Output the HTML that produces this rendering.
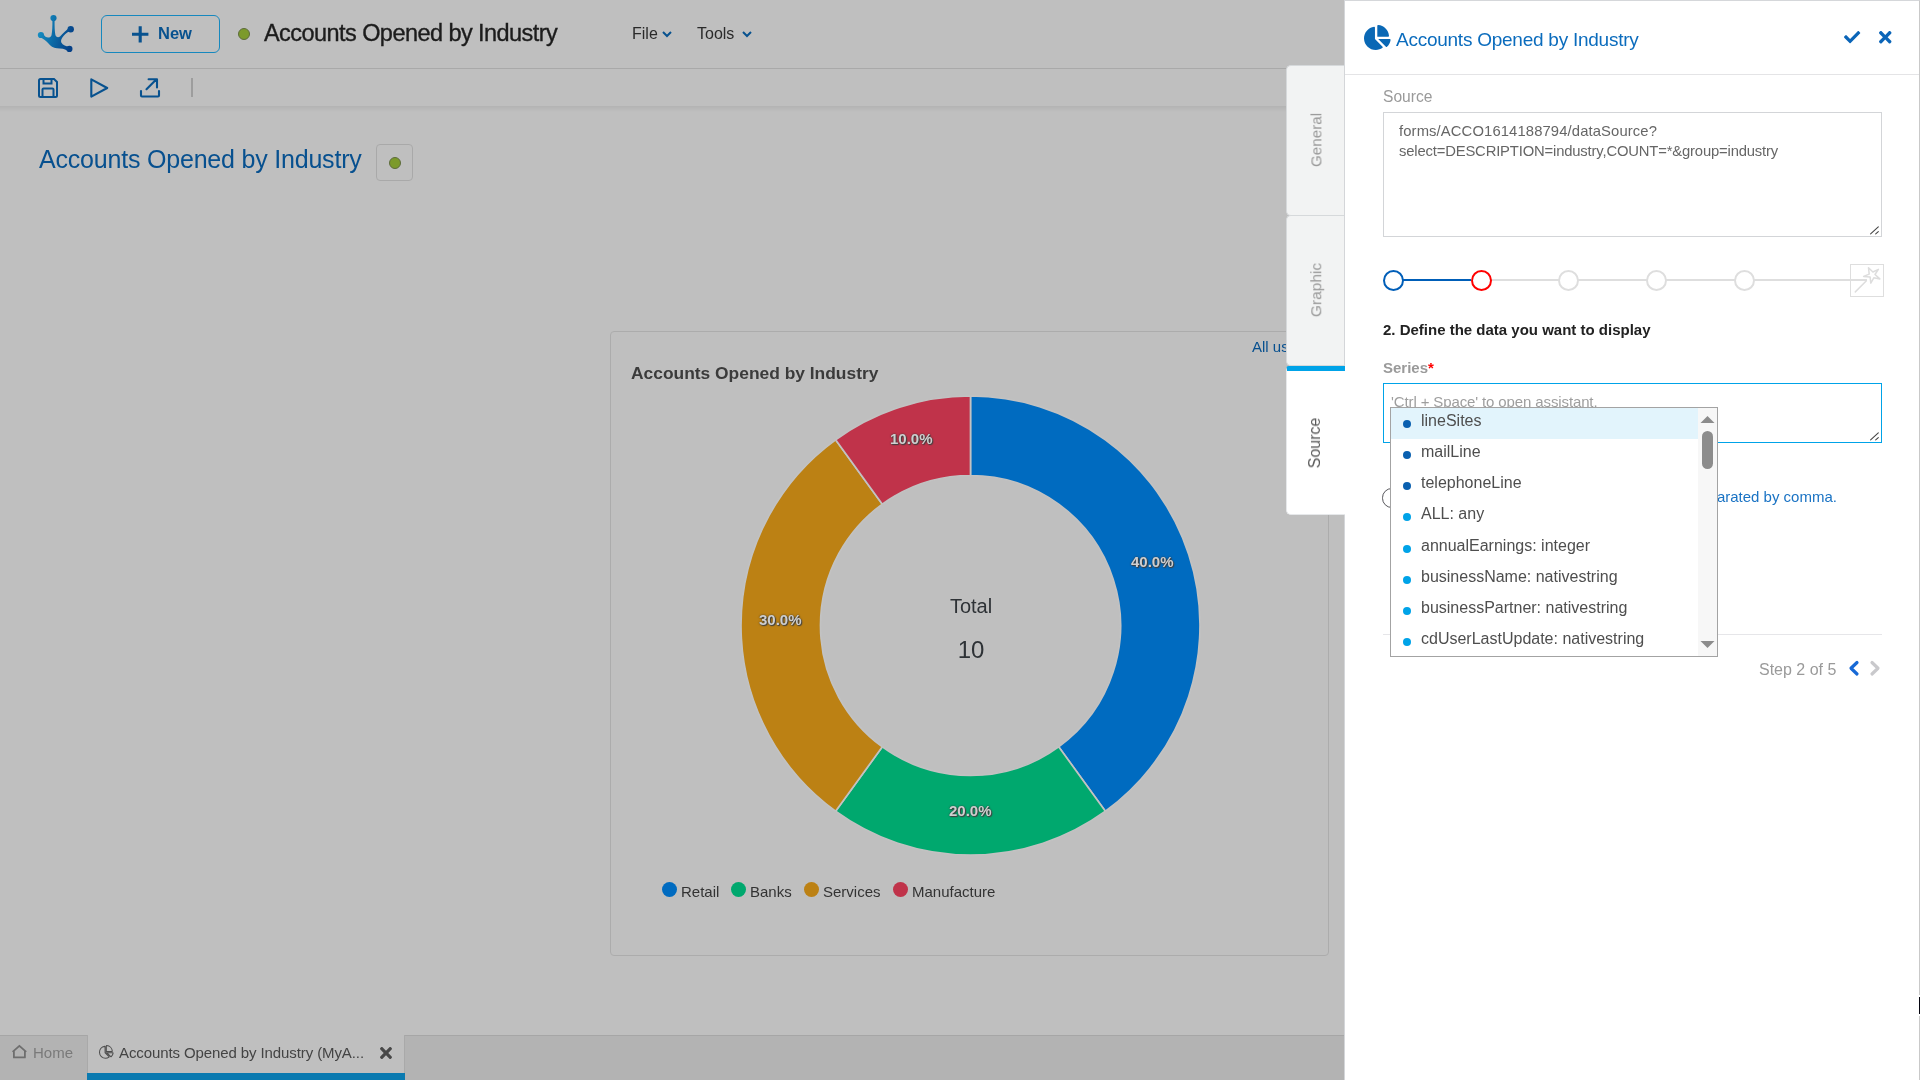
<!DOCTYPE html>
<html><head><meta charset="utf-8">
<style>
*{box-sizing:border-box;margin:0;padding:0}
html,body{width:1920px;height:1080px;overflow:hidden;background:#bfbfbf;font-family:"Liberation Sans",sans-serif}
.a{position:absolute;line-height:1;white-space:nowrap}
svg{position:absolute;overflow:visible}
.a{-webkit-font-smoothing:antialiased;will-change:transform}
</style></head>
<body>
<!-- ============ LEFT APP (dimmed) ============ -->
<div class="a" style="left:0;top:68px;width:1344px;height:1px;background:#a9a9a9"></div>
<div class="a" style="left:0;top:106px;width:1344px;height:6px;background:linear-gradient(#b3b3b3,#bfbfbf)"></div>

<!-- logo -->
<svg style="left:0;top:0" width="100" height="68" viewBox="0 0 100 68">
<defs><linearGradient id="lg" gradientUnits="userSpaceOnUse" x1="38" y1="32" x2="72" y2="42"><stop offset="0" stop-color="#178ec2"/><stop offset="0.45" stop-color="#0b6ba7"/><stop offset="1" stop-color="#053f86"/></linearGradient></defs>
<g fill="url(#lg)">
<circle cx="53.5" cy="18.1" r="3.1"/>
<circle cx="40.9" cy="35" r="3.1"/>
<circle cx="70.7" cy="29.2" r="3.2"/>
<circle cx="69.4" cy="48.9" r="3.1"/>
<path d="M52.4 20C52.5 26 52.2 32 51.5 35.2C50.8 37.5 48 38.2 45.5 36.8L42.5 33.5L39.5 37C43 38.5 46 40.5 48.5 43.5C50.5 46 53 48 57 48.2C61 48.4 65 48.8 68 50.8L70.5 47.2C66 46.5 62.5 45 61.3 42.5C60.5 40.5 61.5 38.5 63.5 36C66 33 68.5 31.2 71.5 30.8L69.8 27.6C67 29.5 63 33.5 60 36.5C58 38 55.8 37 55.3 34.5C54.7 31 54.5 26 54.6 20Z"/>
</g></svg>

<!-- New button -->
<div class="a" style="left:101px;top:15px;width:119px;height:38px;border:1.5px solid #1688be;border-radius:6px"></div>
<svg style="left:132px;top:26px" width="17" height="17" viewBox="0 0 17 17"><path d="M8.2 0.3v16.2M0 8.3h16.4" stroke="#08528f" stroke-width="3.1"/></svg>
<div class="a" style="left:158px;top:25px;font-size:16.5px;font-weight:bold;color:#08528f">New</div>

<!-- status dot + title -->
<div class="a" style="left:238px;top:28px;width:12px;height:12px;border-radius:50%;background:#7c9a2b;border:1px solid #5d6b3c"></div>
<div class="a" style="left:264px;top:22px;font-size:23.5px;color:#1c1c1c;letter-spacing:-0.56px;-webkit-text-stroke:0.35px #1c1c1c">Accounts Opened by Industry</div>

<!-- menus -->
<div class="a" style="left:632px;top:26px;font-size:16px;color:#2a2a2a">File</div>
<svg style="left:662px;top:31px" width="10" height="6" viewBox="0 0 10 6"><path d="M1 1l4 4 4-4" fill="none" stroke="#08528f" stroke-width="2"/></svg>
<div class="a" style="left:697px;top:26px;font-size:16px;color:#2a2a2a">Tools</div>
<svg style="left:742px;top:31px" width="10" height="6" viewBox="0 0 10 6"><path d="M1 1l4 4 4-4" fill="none" stroke="#08528f" stroke-width="2"/></svg>

<!-- toolbar icons -->
<svg style="left:38px;top:78px" width="20" height="20" viewBox="0 0 20 20" fill="none" stroke="#08528f" stroke-width="2">
<path d="M2.5 1h13.5l3 3v13.5a1.5 1.5 0 0 1-1.5 1.5h-15A1.5 1.5 0 0 1 1 17.5v-15A1.5 1.5 0 0 1 2.5 1z"/>
<path d="M5.5 1.5v4h8v-4"/><path d="M4.5 19v-7.5a1 1 0 0 1 1-1h9a1 1 0 0 1 1 1V19"/></svg>
<svg style="left:90px;top:78px" width="20" height="20" viewBox="0 0 20 20" fill="none" stroke="#08528f" stroke-width="2.1" stroke-linejoin="round"><path d="M1.3 1.4 L17.2 10 L1.3 18.6 Z"/></svg>
<svg style="left:140px;top:78px" width="20" height="20" viewBox="0 0 20 20" fill="none" stroke="#08528f" stroke-width="2.1" stroke-linecap="round" stroke-linejoin="round"><path d="M1 13V17.5Q1 18.5 2 18.5H18Q19 18.5 19 17.5V13"/><path d="M6.5 11.2L16.2 1.6M8.6 1.2H17V9.4"/></svg>
<div class="a" style="left:191px;top:78px;width:1.5px;height:19px;background:#9d9d9d"></div>

<!-- page title -->
<div class="a" style="left:39px;top:146.6px;font-size:25px;color:#07508f;letter-spacing:-0.2px">Accounts Opened by Industry</div>
<div class="a" style="left:376px;top:144px;width:37px;height:37px;border:1.5px solid #a9a9a9;border-radius:4px"></div>
<div class="a" style="left:388.5px;top:156.5px;width:12px;height:12px;border-radius:50%;background:#7c9a2b;border:1px solid #5d6b3c"></div>

<!-- chart box -->
<div class="a" style="left:610px;top:331px;width:718.5px;height:624.5px;border:1px solid #acacac;border-radius:4px"></div>
<div class="a" style="left:630.5px;top:365.3px;font-size:17.4px;font-weight:bold;color:#3b3b3b">Accounts Opened by Industry</div>
<div class="a" style="left:1252px;top:338.5px;font-size:15px;color:#07508f">All users</div>

<svg style="left:0;top:0" width="1344" height="1080" viewBox="0 0 1344 1080">
<g stroke="#c2c2c2" stroke-width="1.7" stroke-linejoin="round">
<path d="M970.5,396.0A229.5,229.5 0 0 1 1105.4,811.17L1058.67,746.85A150,150 0 0 0 970.5,475.5Z" fill="#006bc0"/>
<path d="M1105.4,811.17A229.5,229.5 0 0 1 835.6,811.17L882.33,746.85A150,150 0 0 0 1058.67,746.85Z" fill="#00a86e"/>
<path d="M835.6,811.17A229.5,229.5 0 0 1 835.6,439.83L882.33,504.15A150,150 0 0 0 882.33,746.85Z" fill="#bc8114"/>
<path d="M835.6,439.83A229.5,229.5 0 0 1 970.5,396.0L970.5,475.5A150,150 0 0 0 882.33,504.15Z" fill="#c0334a"/>
</g>
</svg>
<div class="a" style="left:921px;top:595.9px;width:100px;text-align:center;font-size:20px;color:#2e3236">Total</div>
<div class="a" style="left:921.2px;top:637.5px;width:100px;text-align:center;font-size:24px;color:#2e3236">10</div>
<div class="a lbl" style="left:1131px;top:554px">40.0%</div>
<div class="a lbl" style="left:890px;top:431px">10.0%</div>
<div class="a lbl" style="left:759px;top:612px">30.0%</div>
<div class="a lbl" style="left:949px;top:803px">20.0%</div>
<style>.lbl{font-size:15px;font-weight:bold;color:#cfcfcf;text-shadow:0 0 2px #333,1px 1px 1px #444}</style>

<!-- legend -->
<div class="a" style="left:662px;top:882px;width:15px;height:15px;border-radius:50%;background:#006bc0"></div>
<div class="a" style="left:681px;top:884px;font-size:15px;color:#333">Retail</div>
<div class="a" style="left:731px;top:882px;width:15px;height:15px;border-radius:50%;background:#00a86e"></div>
<div class="a" style="left:750px;top:884px;font-size:15px;color:#333">Banks</div>
<div class="a" style="left:804px;top:882px;width:15px;height:15px;border-radius:50%;background:#bc8114"></div>
<div class="a" style="left:823px;top:884px;font-size:15px;color:#333">Services</div>
<div class="a" style="left:893px;top:882px;width:15px;height:15px;border-radius:50%;background:#c0334a"></div>
<div class="a" style="left:912px;top:884px;font-size:15px;color:#333">Manufacture</div>

<!-- bottom tab bar -->
<div class="a" style="left:0;top:1035px;width:1344px;height:45px;background:#b3b3b3;border-top:1px solid #a6a6a6"></div>
<div class="a" style="left:86.8px;top:1035px;width:318px;height:45px;background:#bfbfbf;border-left:1px solid #a9a9a9;border-right:1px solid #a9a9a9"></div>
<div class="a" style="left:87px;top:1073px;width:318px;height:7px;background:#0a7ab0"></div>
<svg style="left:12px;top:1045px" width="15" height="14" viewBox="0 0 15 14" fill="none" stroke="#6e6e6e" stroke-width="1.8" stroke-linejoin="round"><path d="M0.6 6.8L7.4 0.8L14.2 6.8M1.9 5.8V12.4H12.9V5.8"/></svg>
<div class="a" style="left:33px;top:1045px;font-size:15px;color:#7a7a7a">Home</div>
<svg style="left:98.6px;top:1044.8px" width="14.6" height="13.8" viewBox="-20 -20 584 552"><path fill="none" stroke="#4e4e4e" stroke-width="42" d="M527.79 288H290.5l158.03 158.03c6.04 6.04 15.98 6.53 22.19.68 38.7-36.46 65.32-85.61 73.13-140.86 1.34-9.46-6.51-17.85-16.06-17.85zm-15.83-64.8C503.72 103.74 408.26 8.28 288.8.04 279.68-.59 272 7.1 272 16.24V240h223.77c9.14 0 16.82-7.68 16.19-16.8zM224 288V50.71c0-9.55-8.39-17.4-17.84-16.06C86.99 51.49-4.1 155.6.14 280.37 4.5 408.51 114.83 513.59 243.03 511.98c50.4-.63 96.97-16.87 135.26-44.03 7.9-5.6 8.42-17.23 1.57-24.08L224 288z"/></svg>
<div class="a" style="left:119px;top:1045px;font-size:15px;color:#444;letter-spacing:-0.1px">Accounts Opened by Industry (MyA...</div>
<svg style="left:380px;top:1047px" width="12" height="12" viewBox="0 0 352 352"><path fill="#484848" d="M242.72 176l100.07-100.07c12.28-12.28 12.28-32.19 0-44.48l-22.24-22.24c-12.28-12.28-32.19-12.28-44.48 0L176 109.28 75.93 9.21c-12.28-12.28-32.19-12.28-44.48 0L9.21 31.45c-12.28 12.28-12.28 32.19 0 44.48L109.28 176 9.21 276.07c-12.28 12.28-12.28 32.19 0 44.48l22.24 22.24c12.28 12.28 32.2 12.28 44.48 0L176 242.72l100.07 100.07c12.28 12.28 32.2 12.28 44.48 0l22.24-22.24c12.28-12.28 12.28-32.19 0-44.48L242.72 176z"/></svg>

<!-- ============ RIGHT PANEL ============ -->
<div class="a" style="left:1344px;top:0;width:576px;height:1080px;background:#fff;border-left:1px solid #d4d6d9;border-top:1px solid #d5d7da;border-right:1px solid #c9c9c9"></div>
<div class="a" style="left:1345px;top:74px;width:574px;height:1px;background:#e4e4e6"></div>

<svg style="left:1364px;top:25px" width="26.6" height="25" viewBox="0 0 544 512"><path fill="#0a68b5" d="M527.79 288H290.5l158.03 158.03c6.04 6.04 15.980 6.53 22.19.68 38.7-36.46 65.32-85.61 73.13-140.86 1.34-9.46-6.51-17.85-16.06-17.85zm-15.83-64.8C503.72 103.74 408.26 8.28 288.8.04 279.68-.59 272 7.1 272 16.24V240h223.77c9.14 0 16.82-7.68 16.19-16.8zM224 288V50.71c0-9.550-8.39-17.4-17.84-16.06C86.99 51.49-4.1 155.6.14 280.37 4.5 408.51 114.83 513.59 243.03 511.98c50.4-.63 96.97-16.87 135.26-44.03 7.9-5.6 8.42-17.23 1.57-24.08L224 288z"/></svg>
<div class="a" style="left:1395.5px;top:30px;font-size:19px;color:#0b6cbd;letter-spacing:-0.25px">Accounts Opened by Industry</div>
<svg style="left:1843.75px;top:28.5px" width="16.25" height="16.25" viewBox="0 0 512 512"><path fill="#0b65b8" d="M173.898 439.404l-166.4-166.4c-9.997-9.997-9.997-26.206 0-36.204l36.203-36.204c9.997-9.998 26.207-9.998 36.204 0L192 312.69 432.095 72.596c9.997-9.997 26.207-9.997 36.204 0l36.203 36.204c9.997 9.997 9.997 26.206 0 36.204l-294.4 294.401c-9.998 9.997-26.207 9.997-36.204-.001z"/></svg>
<svg style="left:1878.75px;top:30.6px" width="12.5" height="12.5" viewBox="0 0 352 352"><path fill="#0b65b8" d="M242.72 176l100.07-100.07c12.28-12.28 12.28-32.19 0-44.48l-22.24-22.24c-12.28-12.28-32.19-12.28-44.48 0L176 109.28 75.93 9.21c-12.28-12.28-32.19-12.28-44.48 0L9.21 31.45c-12.28 12.28-12.28 32.19 0 44.48L109.28 176 9.21 276.07c-12.28 12.28-12.28 32.19 0 44.48l22.24 22.24c12.28 12.28 32.2 12.28 44.48 0L176 242.72l100.07 100.07c12.28 12.28 32.2 12.28 44.48 0l22.24-22.24c12.28-12.28 12.28-32.19 0-44.48L242.72 176z"/></svg>

<div class="a" style="left:1383px;top:88.7px;font-size:15.6px;color:#9a9a9a">Source</div>
<div class="a" style="left:1383px;top:112px;width:499px;height:125px;border:1px solid #d3d5d8"></div>
<div class="a" style="left:1398.5px;top:123.5px;font-size:14.8px;color:#666;letter-spacing:0.12px">forms/ACCO1614188794/dataSource?</div>
<div class="a" style="left:1398.5px;top:144.3px;font-size:14.8px;color:#666;letter-spacing:-0.16px">select=DESCRIPTION=industry,COUNT=*&amp;group=industry</div>
<svg style="left:1868px;top:224px" width="12" height="12" viewBox="0 0 12 12" stroke="#444" stroke-width="1.1"><path d="M2.6 9.9L10.3 2.9M7.7 9.9L10.3 7.6" stroke-linecap="round"/></svg>

<!-- steps -->
<div class="a" style="left:1403px;top:279px;width:68px;height:2px;background:#005eb8"></div>
<div class="a" style="left:1491px;top:279px;width:360px;height:2px;background:#dedede"></div>
<div class="a" style="left:1383px;top:270px;width:21px;height:21px;border:2px solid #005eb8;border-radius:50%;background:#fff"></div>
<div class="a" style="left:1470.5px;top:270px;width:21px;height:21px;border:2px solid #ff0000;border-radius:50%;background:#fff"></div>
<div class="a" style="left:1558px;top:270px;width:21px;height:21px;border:2px solid #dedede;border-radius:50%;background:#fff"></div>
<div class="a" style="left:1646px;top:270px;width:21px;height:21px;border:2px solid #dedede;border-radius:50%;background:#fff"></div>
<div class="a" style="left:1734px;top:270px;width:21px;height:21px;border:2px solid #dedede;border-radius:50%;background:#fff"></div>
<div class="a" style="left:1850px;top:264px;width:34px;height:33px;border:1px solid #dedede"></div>
<div class="a" style="left:1851px;top:279px;width:16px;height:2px;background:#dedede"></div>
<svg style="left:1850px;top:264px" width="34" height="33" viewBox="0 0 34 33" fill="none" stroke="#dddddd" stroke-width="1.5" stroke-linejoin="round" stroke-linecap="round">
<path d="M5.3 27.9L16.4 16.8"/>
<path d="M18.5 3.8L22.9 8L28.4 5.4L25 10.5L29.8 14.9L23.8 13.8L20.8 19.1L20.1 12.9L13.6 12.4L19.2 10.1Z"/></svg>

<div class="a" style="left:1383px;top:322px;font-size:15px;font-weight:bold;color:#222">2. Define the data you want to display</div>
<div class="a" style="left:1383px;top:360px;font-size:15px;font-weight:bold;color:#9a9a9a">Series<span style="color:#f00">*</span></div>
<div class="a" style="left:1383px;top:383px;width:499px;height:60px;border:1.5px solid #00a3e8"></div>
<div class="a" style="left:1391px;top:394px;font-size:15px;color:#9e9e9e;letter-spacing:-0.12px">'Ctrl + Space' to open assistant.</div>
<svg style="left:1868px;top:430.2px" width="12" height="12" viewBox="0 0 12 12" stroke="#444" stroke-width="1.1"><path d="M2.6 9.9L10.3 2.9M7.7 9.9L10.3 7.6" stroke-linecap="round"/></svg>

<!-- radio + help text -->
<div class="a" style="left:1382px;top:487.5px;width:19.5px;height:19.5px;border:1.8px solid #57575c;border-radius:50%"></div>
<div class="a" style="right:83px;top:488.8px;font-size:15px;color:#1a73c4">Fields must be separated by comma.</div>

<div class="a" style="left:1383px;top:634px;width:499px;height:1px;background:#e6e6e9"></div>
<div class="a" style="left:1759.3px;top:661.8px;font-size:16px;color:#9a9a9a">Step 2 of 5</div>
<svg style="left:1848px;top:660.5px" width="11" height="14.5" viewBox="0 0 11 14.5"><path d="M9 1.5L3 7.25 9 13" fill="none" stroke="#1769d6" stroke-width="3.2" stroke-linecap="round" stroke-linejoin="round"/></svg>
<svg style="left:1869.6px;top:660.5px" width="11" height="14.5" viewBox="0 0 11 14.5"><path d="M2 1.5L8 7.25 2 13" fill="none" stroke="#c9c9cc" stroke-width="3.2" stroke-linecap="round" stroke-linejoin="round"/></svg>

<!-- dropdown -->
<div class="a" style="left:1390px;top:407px;width:328px;height:250px;background:#fff;border:1px solid #a3a3a3"></div>
<div class="a" style="left:1391px;top:408px;width:307px;height:31px;background:#e2f4fc"></div>
<div class="a" style="left:1698px;top:408px;width:19px;height:248px;background:#f7f7f7"></div>
<div class="a" style="left:1702px;top:431px;width:11px;height:38px;border-radius:6px;background:#8c8c8c"></div>
<svg style="left:1700px;top:415px" width="15" height="9" viewBox="0 0 15 9"><path d="M0.5 8L7.5 1 14.5 8z" fill="#8c8c8c"/></svg>
<svg style="left:1700px;top:640px" width="15" height="9" viewBox="0 0 15 9"><path d="M0.5 1L7.5 8 14.5 1z" fill="#8c8c8c"/></svg>
<div class="a" style="left:1403px;top:419.5px;width:8px;height:8px;border-radius:50%;background:#0a60b0"></div>
<div class="a" style="left:1421px;top:412.5px;font-size:16px;color:#4e4e4e">lineSites</div>
<div class="a" style="left:1403px;top:450.75px;width:8px;height:8px;border-radius:50%;background:#0a60b0"></div>
<div class="a" style="left:1421px;top:443.75px;font-size:16px;color:#4e4e4e">mailLine</div>
<div class="a" style="left:1403px;top:482.0px;width:8px;height:8px;border-radius:50%;background:#0a60b0"></div>
<div class="a" style="left:1421px;top:475.0px;font-size:16px;color:#4e4e4e">telephoneLine</div>
<div class="a" style="left:1403px;top:513.25px;width:8px;height:8px;border-radius:50%;background:#00a3e8"></div>
<div class="a" style="left:1421px;top:506.25px;font-size:16px;color:#4e4e4e">ALL: any</div>
<div class="a" style="left:1403px;top:544.5px;width:8px;height:8px;border-radius:50%;background:#00a3e8"></div>
<div class="a" style="left:1421px;top:537.5px;font-size:16px;color:#4e4e4e">annualEarnings: integer</div>
<div class="a" style="left:1403px;top:575.75px;width:8px;height:8px;border-radius:50%;background:#00a3e8"></div>
<div class="a" style="left:1421px;top:568.75px;font-size:16px;color:#4e4e4e">businessName: nativestring</div>
<div class="a" style="left:1403px;top:607.0px;width:8px;height:8px;border-radius:50%;background:#00a3e8"></div>
<div class="a" style="left:1421px;top:600.0px;font-size:16px;color:#4e4e4e">businessPartner: nativestring</div>
<div class="a" style="left:1403px;top:638.25px;width:8px;height:8px;border-radius:50%;background:#00a3e8"></div>
<div class="a" style="left:1421px;top:631.25px;font-size:16px;color:#4e4e4e">cdUserLastUpdate: nativestring</div>


<!-- vertical tabs -->
<div class="a" style="left:1286px;top:65px;width:58px;height:151px;background:#f2f3f3;border:1px solid #d6d9db;border-right:none;border-radius:5px 0 0 5px"></div>
<div class="a" style="left:1286px;top:215px;width:58px;height:151px;background:#f2f3f3;border:1px solid #d6d9db;border-right:none;border-radius:5px 0 0 5px"></div>
<div class="a" style="left:1286px;top:366px;width:59px;height:149px;background:#fff;border-radius:3px 0 0 5px;border-top:5px solid #00a3e8;border-left:1px solid #e6e8ea;border-bottom:1px solid #e6e8ea"></div>
<div class="a" style="left:1316px;top:140.4px;font-size:15.2px;color:#9a9a9a;transform:translate(-50%,-50%) rotate(-90deg);transform-origin:center">General</div>
<div class="a" style="left:1316px;top:290.2px;font-size:15.5px;color:#9a9a9a;transform:translate(-50%,-50%) rotate(-90deg)">Graphic</div>
<div class="a" style="left:1315.3px;top:443px;font-size:16px;color:#5a5a5a;transform:translate(-50%,-50%) rotate(-90deg)">Source</div>

<!-- I-beam cursor -->
<div class="a" style="left:1919px;top:995px;width:1px;height:21px;background:#fff"></div>
<div class="a" style="left:1918.6px;top:997px;width:1.4px;height:17px;background:#05050f"></div>


</body></html>
